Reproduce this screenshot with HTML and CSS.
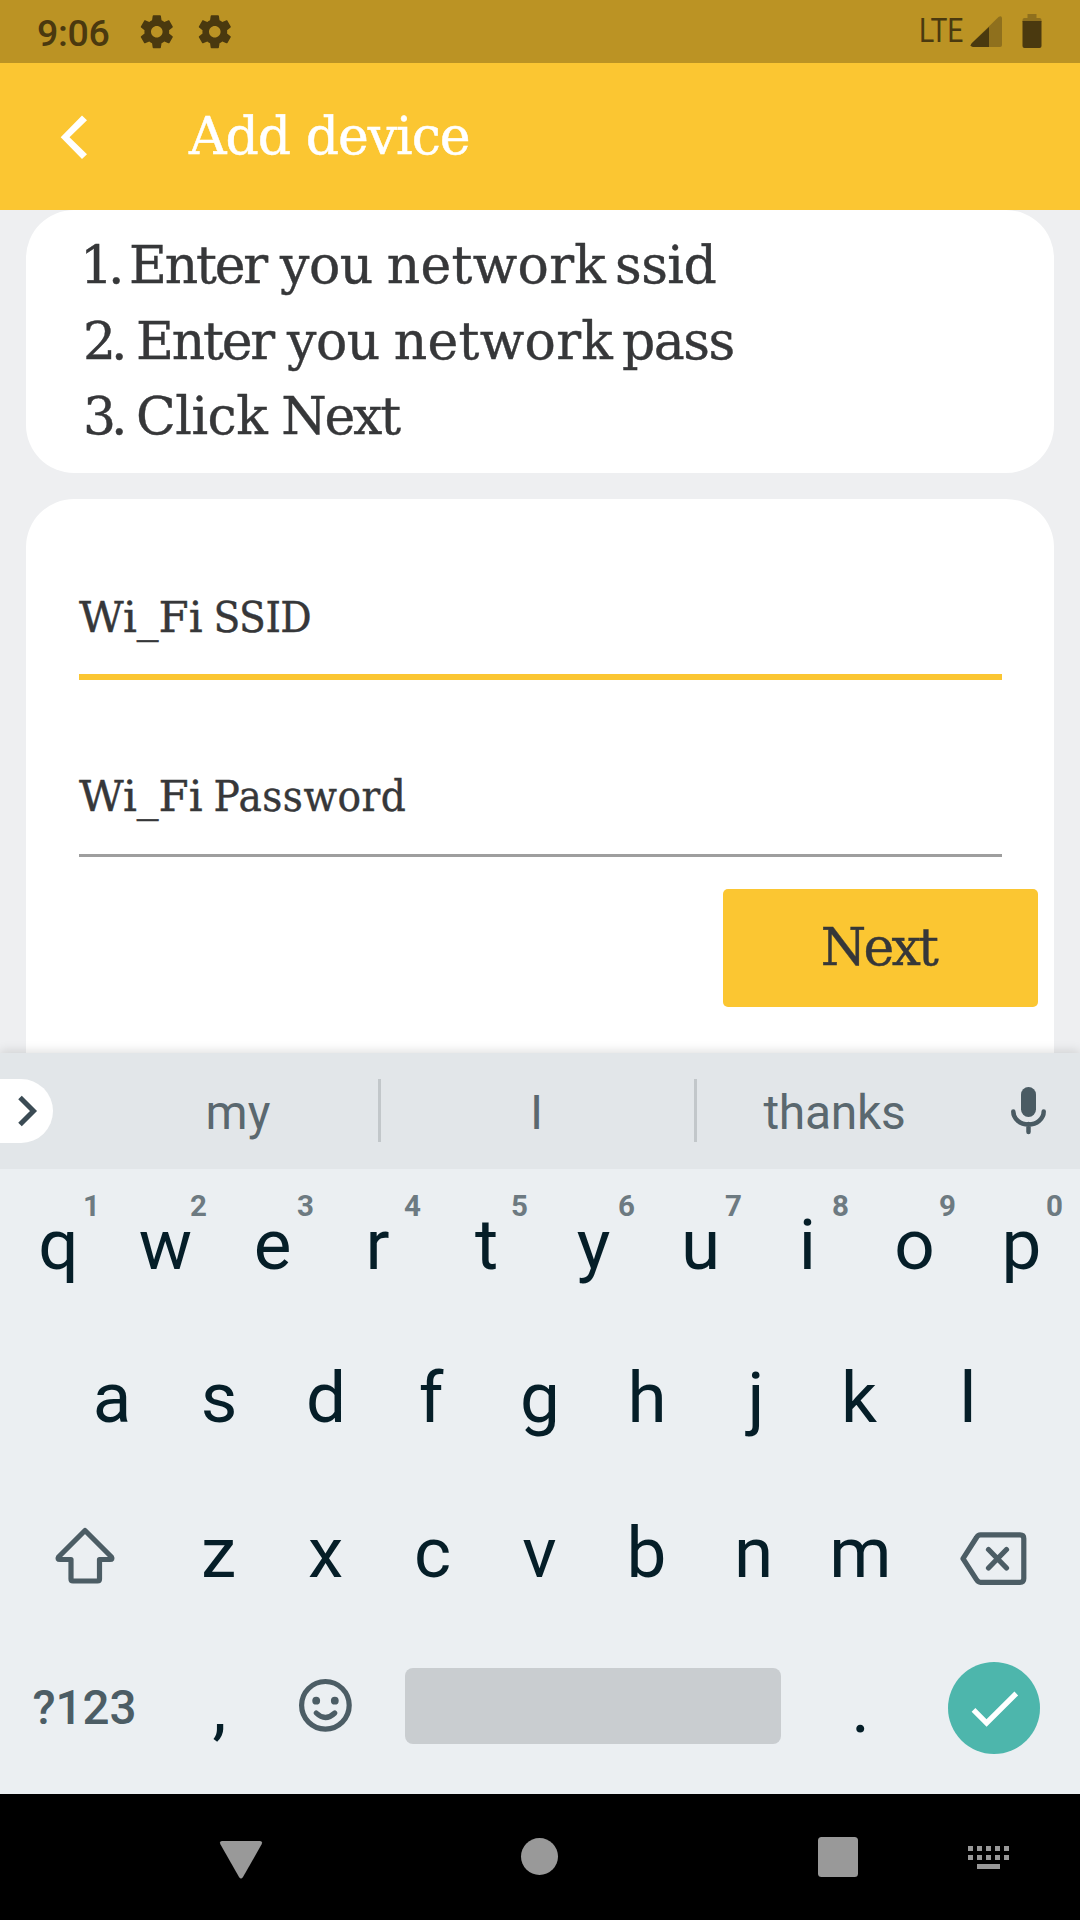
FILE: index.html
```html
<!DOCTYPE html>
<html lang="en">
<head>
<meta charset="utf-8">
<title>Add device</title>
<link rel="stylesheet" href="styles.css">
</head>
<body>
<svg width="0" height="0" class="defs">
  <symbol id="gear" viewBox="0 0 24 24"><path d="M19.43 12.98c.04-.32.07-.64.07-.98s-.03-.66-.07-.98l2.11-1.65c.19-.15.24-.42.12-.64l-2-3.46c-.12-.22-.39-.3-.61-.22l-2.49 1c-.52-.4-1.08-.73-1.69-.98l-.38-2.65C14.46 2.18 14.25 2 14 2h-4c-.25 0-.46.18-.49.42l-.38 2.65c-.61.25-1.17.59-1.69.98l-2.49-1c-.23-.09-.49 0-.61.22l-2 3.46c-.13.22-.07.49.12.64l2.11 1.65c-.04.32-.07.65-.07.98s.03.66.07.98l-2.11 1.65c-.19.15-.24.42-.12.64l2 3.46c.12.22.39.3.61.22l2.49-1c.52.4 1.08.73 1.69.98l.38 2.65c.03.24.24.42.49.42h4c.25 0 .46-.18.49-.42l.38-2.65c.61-.25 1.17-.59 1.69-.98l2.49 1c.23.09.49 0 .61-.22l2-3.46c.12-.22.07-.49-.12-.64l-2.11-1.65zM12 15.5c-1.93 0-3.5-1.57-3.5-3.5s1.57-3.5 3.5-3.5 3.5 1.57 3.5 3.5-1.57 3.5-3.5 3.5z"/></symbol>
</svg>
<div class="screen">
  <div class="status">
    <span class="time">9:06</span>
    <svg class="gear"><use href="#gear"/></svg>
    <svg class="gear"><use href="#gear"/></svg>
    <span class="lte">LTE</span>
    <svg class="signal" width="32" height="63" viewBox="970 0 32 63">
      <path d="M1002 18v27q0 2-2 2H973q-4-1-1-4L998.500 17q3-2 3.500 1z" fill="#8f701d"/>
      <path d="M989 27v20H973q-4-1-1-4z"/>
    </svg>
    <svg class="battery" width="20" height="63" viewBox="1021.500 0 20 63">
      <path d="M1027 14h9v4h3q2 0 2 2v2h-19v-2q0-2 2-2h3z" fill="#8f701d"/>
      <path d="M1022 21h19v25q0 2-2 2h-15q-2 0-2-2z"/>
    </svg>
  </div>
  <header class="appbar">
    <svg class="back" width="40" height="60" viewBox="56 106 40 60"><path d="M82 114.500L87 119.300 69.500 136.300 87 153.300 82 158 60.700 136.300z" fill="#fff"/></svg>
    <h1>Add device</h1>
  </header>
  <main class="content">
    <section class="card steps">
      <p class="s1"><span class="num">1.</span><span><span class="tight">Enter</span> you <span class="wide">network </span>ssid</span></p>
      <p class="s2"><span class="num">2.</span><span><span class="tight">Enter</span> you <span class="wide">network </span><span class="snug">pass</span></span></p>
      <p class="s3"><span class="num">3.</span><span>Click <span class="tight">Next</span></span></p>
    </section>
    <section class="card form">
      <div class="field active">Wi_Fi <span class="narrow">SSID</span></div>
      <div class="field">Wi_Fi <span class="narrow pass">Password</span></div>
      <button class="next">Next</button>
    </section>
  </main>
  <div class="keyboard">
    <div class="suggest">
      <span class="pill"><svg width="53" height="64" viewBox="0 1079 53 64"><path d="M20 1097.500L33.500 1111 20 1124.500" fill="none" stroke="#3b4b54" stroke-width="5"/></svg></span>
      <span class="word first">my</span>
      <i></i>
      <span class="word mid">I</span>
      <i></i>
      <span class="word last">thanks</span>
      <svg class="mic" width="110" height="116" viewBox="970 1053 110 116"><rect x="1021" y="1087" width="15" height="30" rx="7.500" fill="#4a5b63"/><path d="M1013.300 1111.500a15.200 13 0 0 0 30.400 0M1028.500 1124v8" fill="none" stroke="#4a5b63" stroke-width="4.500" stroke-linecap="round"/></svg>
    </div>
    <div class="row r1">
      <span>q<b>1</b></span><span>w<b>2</b></span><span>e<b>3</b></span><span class="left">r<b>4</b></span><span>t<b>5</b></span><span>y<b>6</b></span><span>u<b>7</b></span><span>i<b>8</b></span><span>o<b>9</b></span><span>p<b>0</b></span>
    </div>
    <div class="row r2">
      <span>a</span><span>s</span><span>d</span><span class="left">f</span><span>g</span><span>h</span><span class="right">j</span><span class="left">k</span><span>l</span>
    </div>
    <div class="row r3">
      <svg width="165" height="153" viewBox="0 1476 165 153"><path d="M85 1530.500L111.500 1557q1.500 2.500-1.500 2.500H99.500V1579q0 2-2 2H73q-2 0-2-2v-19.500H60q-3 0-1.500-2.500z" class="line"/></svg>
      <span>z</span><span>x</span><span>c</span><span>v</span><span>b</span><span>n</span><span>m</span>
      <svg width="166" height="153" viewBox="914 1476 166 153"><path d="M963 1558.700L976.500 1537.500q1.500-2.700 4-2.700H1020q3.800 0 3.800 3.800V1578.500q0 3.800-3.800 3.800H980.500q-2.500 0-4-2.700zM988.500 1549.500l18 18.500M1006.500 1549.500l-18 18.500" class="line"/></svg>
    </div>
    <div class="row r4">
      <span class="sym">?123</span>
      <span>,</span>
      <svg width="106" height="157" viewBox="273 1629 106 157"><circle cx="325.400" cy="1705.300" r="23.800" class="line"/><circle cx="316.200" cy="1700.700" r="3.900" fill="#4c5d65"/><circle cx="334.800" cy="1700.700" r="3.900" fill="#4c5d65"/><path d="M316.200 1713q9.200 9 18.600 0" class="line"/></svg>
      <span class="space"></span>
      <span>.</span>
      <svg width="166" height="157" viewBox="914 1629 166 157"><circle cx="994" cy="1708" r="46" fill="#4db6ac"/><path d="M973.500 1709.800l13.100 13.200 29.700-29.500" fill="none" stroke="#fff" stroke-width="5.300"/></svg>
    </div>
  </div>
  <nav class="nav">
    <svg width="1080" height="126" viewBox="0 1794 1080 126" fill="#999">
      <path d="M222 1841h38q3 0 1.500 3.500L243 1877q-2 3-4 0L220.500 1844.500Q219 1841 222 1841z"/>
      <circle cx="539.500" cy="1856.500" r="18.500"/>
      <rect x="818" y="1837" width="40" height="40" rx="3.500"/>
      <path d="M968 1846h5v5h-5zM977 1846h5v5h-5zM986 1846h5v5h-5zM995 1846h5v5h-5zM1004 1846h5v5h-5zM968 1855h5v5h-5zM977 1855h5v5h-5zM986 1855h5v5h-5zM995 1855h5v5h-5zM1004 1855h5v5h-5zM977 1864h23v5h-23z"/>
    </svg>
  </nav>
</div>
</body>
</html>
```
FILE: styles.css
```css
* { box-sizing: border-box; margin: 0; padding: 0; }
body { width: 1080px; height: 1920px; overflow: hidden; font-family: Roboto, sans-serif; }
svg { display: block; flex: none; }
.defs { position: absolute; }
.screen { display: flex; flex-direction: column; width: 1080px; height: 1920px; }

.status { height: 63px; background: #bb9324; color: #4a390f; fill: #4a390f; display: flex; align-items: center; padding: 0 38.500px 0 37px; }
.time { font-size: 37.500px; font-weight: 500; width: 100px; padding-top: 3px; letter-spacing: -.3px; }
.gear { width: 39.600px; height: 39.600px; margin-right: 18.400px; }
.lte { margin-left: auto; width: 51px; font-size: 32.500px; transform: scaleX(.87); transform-origin: left; padding-bottom: 1px; }
.signal { margin-right: 19.500px; }

.appbar { height: 147px; background: #fbc632; display: flex; align-items: center; padding-left: 56px; }
.appbar h1, .steps, .form { font-family: "DejaVu Serif", serif; font-weight: 400; }
.appbar h1 { color: #fff; font-size: 52px; line-height: 60px; margin: -1px 0 0 93px; letter-spacing: -1px; -webkit-text-stroke: .5px #fff; }

.content { height: 843px; background: #eeeff1; padding: 0 26px; overflow: hidden; color: #363739; }
.card { background: #fff; border-radius: 48px; -webkit-text-stroke: .4px #363739; }
.steps { height: 262.500px; padding: 18px 0 0 57px; font-size: 52px; line-height: 75.500px; white-space: nowrap; word-spacing: -2px; letter-spacing: -.5px; }
.steps p { display: flex; }
.num { width: 53px; letter-spacing: -5px; }
.s1 .num { width: 46px; margin-left: -3px; margin-right: 3px; }
.tight { letter-spacing: -2.200px; }
.wide { letter-spacing: .3px; word-spacing: -8px; }
.snug { letter-spacing: -1.500px; }
.form { height: 620px; margin-top: 26px; padding: 76px 52.500px 0 53px; font-size: 43.500px; display: flex; flex-direction: column; word-spacing: -3px; }
.narrow { font-family: "DejaVu Serif Condensed", "DejaVu Serif", serif; font-stretch: condensed; letter-spacing: -.5px; }
.narrow.pass { letter-spacing: .5px; }
.field { height: 105.500px; line-height: 91px; border-bottom: 3px solid #9e9e9e; white-space: nowrap; }
.field.active { line-height: 84px; border-bottom: 6px solid #fbc632; margin-bottom: 71px; }
.next { align-self: flex-end; width: 315px; height: 118px; margin: 32px -36.500px 0 0; padding: 0 4px 2px 0; border: 0; border-radius: 5px; background: #fbc632; color: #363739; font: inherit; font-size: 52px; letter-spacing: -2.800px; }

.keyboard { height: 741px; background: #ebeff2; position: relative; box-shadow: 0 -2px 10px rgba(0, 0, 0, .13); }
.suggest { height: 116px; background: #e2e6e9; display: flex; align-items: center; color: #5a686f; font-size: 48px; }
.pill { width: 52.500px; height: 64px; background: #fff; border-radius: 0 32px 32px 0; overflow: hidden; }
.suggest i { width: 3px; height: 63px; margin-bottom: 1px; background: #c2c7ca; }
.word { width: 313px; text-align: center; padding-top: 3px; }
.word.first { width: 280px; margin-left: 45.500px; }
.word.mid { padding-right: 2px; }
.word.last { width: 273px; padding-left: 2px; letter-spacing: -.3px; }
.row { display: flex; justify-content: center; color: #051e28; font-size: 71px; }
.row span { width: 107px; display: flex; align-items: center; justify-content: center; position: relative; }
.row .left { padding-right: 4px; }
.row .right { padding-left: 4px; }
.row b { position: absolute; left: 73px; top: 20px; width: 27px; text-align: center; font-size: 29.500px; line-height: 34px; font-weight: 700; color: #6d7a81; }
.r1 { height: 150px; }
.r2 { height: 157px; }
.r3 { height: 153px; }
.r4 { height: 157px; }
.line { fill: none; stroke: #4c5d65; stroke-width: 5.200px; stroke-linecap: round; stroke-linejoin: round; }
.row .sym { width: 166px; padding-left: 3px; font-size: 47.500px; font-weight: 500; color: #4c5d65; }
.row .space { width: 376px; height: 76px; margin: 39px 26px 0; background: #c9cdd0; border-radius: 8px; }
.nav { height: 126px; background: #000; }
```
